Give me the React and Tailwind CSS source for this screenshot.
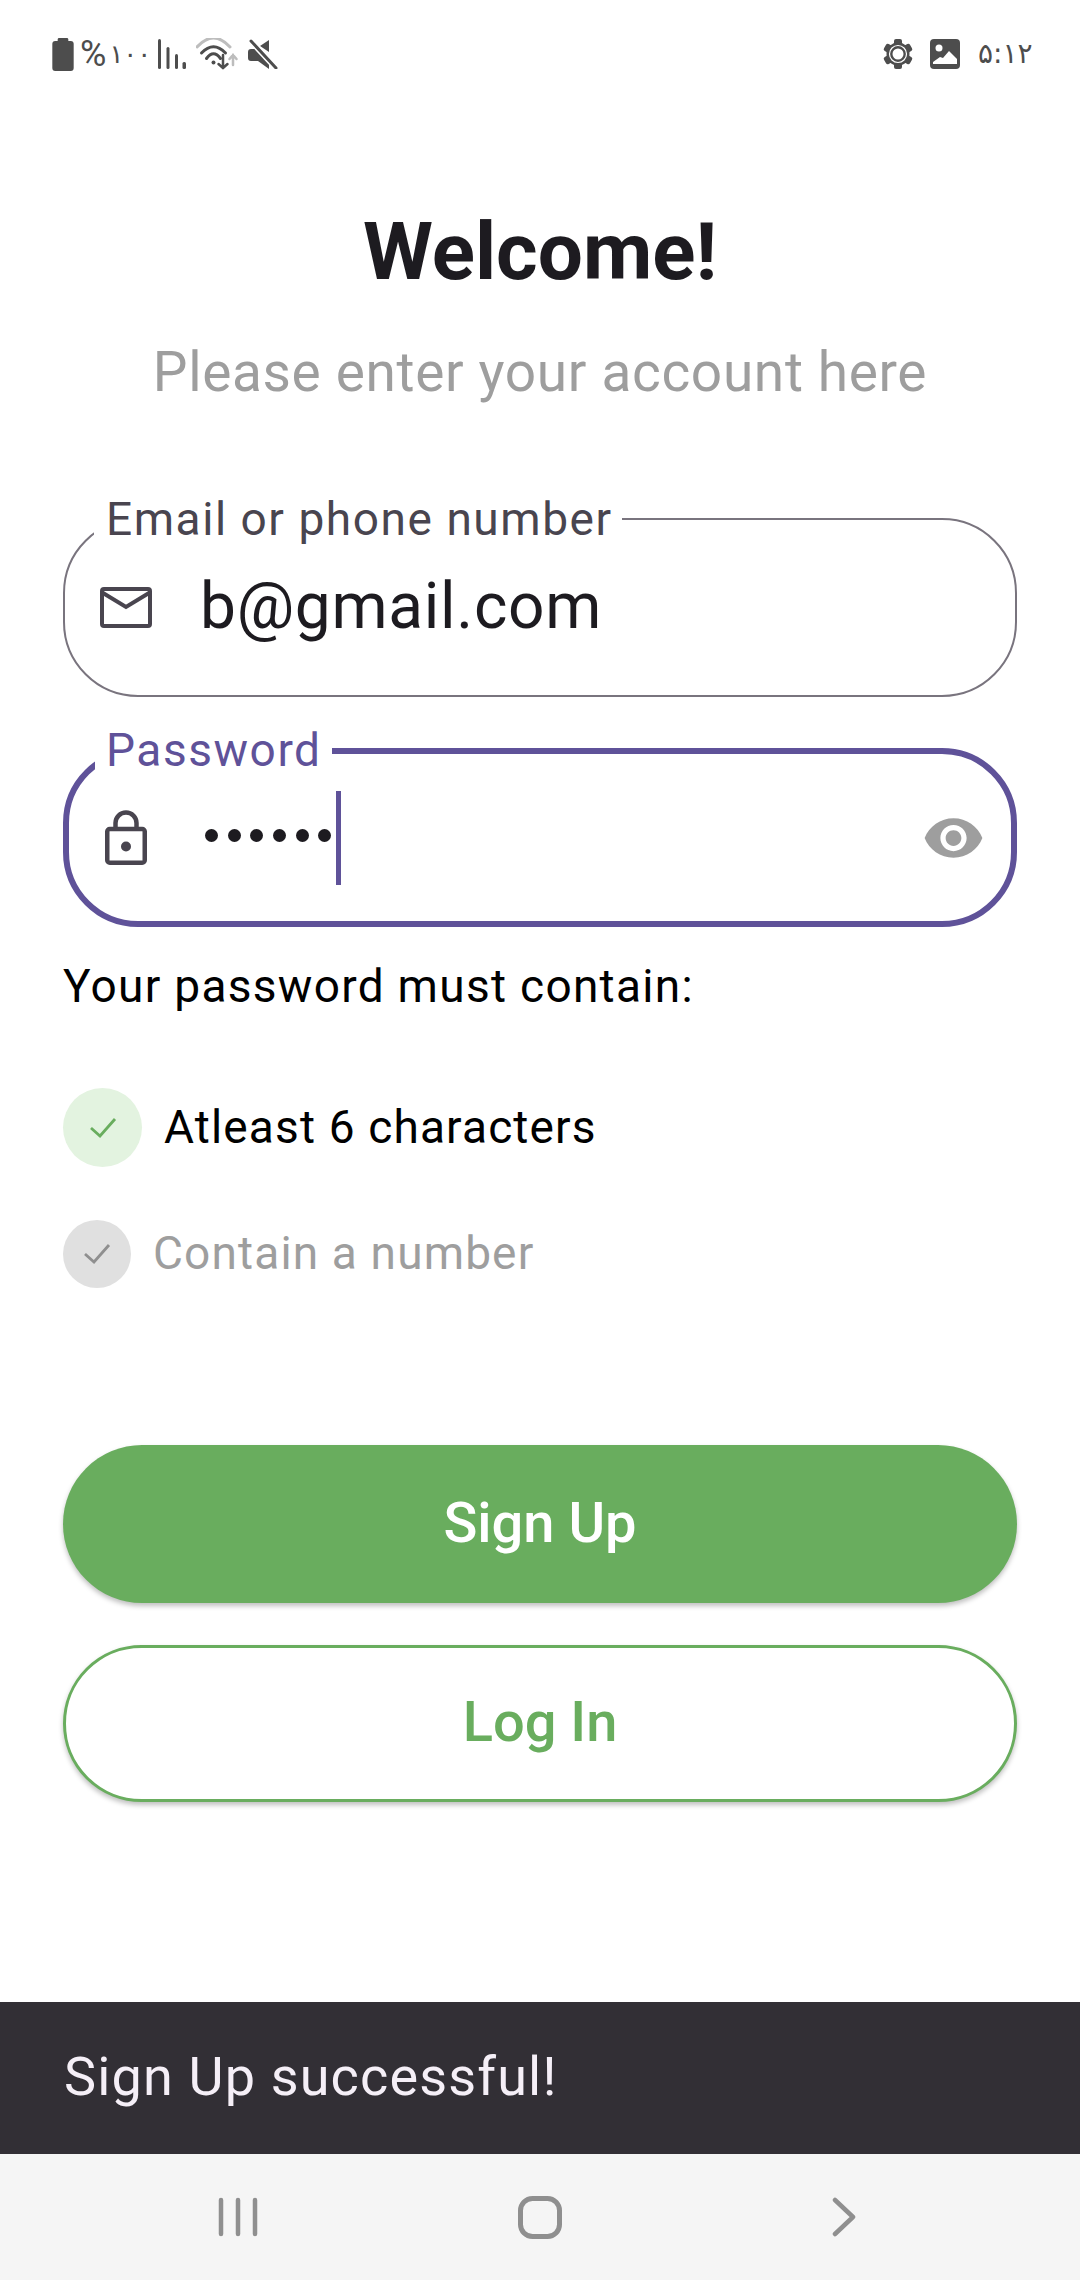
import { useState } from 'react';

function StatusBar() {
  return (
    <div className="h-[108px] flex items-center justify-between pl-[52px] pr-[52px] text-[#4d4d4d]">
      <div className="flex items-center">
        <svg width="22" height="33" viewBox="0 0 22 34" fill="#4d4d4d">
          <path d="M7 0h8a1.5 1.5 0 0 1 1.5 1.5V3H19a3 3 0 0 1 3 3v25a3 3 0 0 1-3 3H3a3 3 0 0 1-3-3V6a3 3 0 0 1 3-3h2.500V1.500A1.500 1.500 0 0 1 7 0z" />
        </svg>
        <span className="ml-[6px] w-[64px] flex items-center whitespace-nowrap leading-none">
          <span className="text-[36px] font-['Roboto',sans-serif]">%</span>
          <span className="ml-[3px] text-[26px] tracking-[-2px] font-['DejaVu_Sans',sans-serif]">۱۰۰</span>
        </span>
        <svg className="ml-[14px]" width="28" height="30" viewBox="0 0 28 30" fill="#4d4d4d">
          <rect x="0" y="0" width="3" height="30" rx="1.500" />
          <rect x="8.500" y="8" width="3" height="22" rx="1.500" />
          <rect x="17" y="15" width="3" height="15" rx="1.500" />
          <rect x="24.500" y="23" width="3.500" height="7" rx="1.500" />
        </svg>
        <svg className="ml-[10px]" width="42" height="32" viewBox="0 0 42 32" fill="none" strokeLinecap="round">
          <path d="M1 9Q17.500 -9 34 9" stroke="#bdbdbd" strokeWidth="3" />
          <path d="M5.500 15Q17.500 2.500 29.500 15" stroke="#4d4d4d" strokeWidth="3" />
          <path d="M10.500 20.500Q17.500 11 24.500 20.500" stroke="#4d4d4d" strokeWidth="3" />
          <circle cx="17.500" cy="24.500" r="2" fill="#4d4d4d" />
          <path d="M27 17V30M22.500 26l4.500 4 4.500-4" stroke="#4d4d4d" strokeWidth="2.500" />
          <path d="M37 27V17M33.500 21l3.500-4 3.500 4" stroke="#bdbdbd" strokeWidth="2.500" />
        </svg>
        <svg className="ml-[10px]" width="30" height="30" viewBox="0 0 30 30" fill="#4d4d4d">
          <path d="M21 1v12L12 7z" />
          <path d="M0 13a3 3 0 0 1 3-3h4l14 15v5l-11-8H3a3 3 0 0 1-3-3z" />
          <path d="M3 2l25 27" stroke="#fff" strokeWidth="6" />
          <path d="M3 2l25 27" stroke="#4d4d4d" strokeWidth="3" strokeLinecap="round" />
        </svg>
      </div>
      <div className="flex items-center">
        <svg width="30" height="30" viewBox="0 0 30 30">
          <g fill="#4d4d4d">
            <circle cx="15" cy="15" r="11.500" />
            <rect x="11" y="0" width="8" height="30" rx="2" />
            <rect x="11" y="0" width="8" height="30" rx="2" transform="rotate(60 15 15)" />
            <rect x="11" y="0" width="8" height="30" rx="2" transform="rotate(120 15 15)" />
          </g>
          <circle cx="15" cy="15" r="8.500" fill="none" stroke="#fff" strokeWidth="1.200" />
          <circle cx="15" cy="15" r="5.500" fill="#fff" />
        </svg>
        <svg className="ml-[17px]" width="30" height="30" viewBox="0 0 30 30">
          <rect width="30" height="30" rx="4" fill="#4d4d4d" />
          <circle cx="9" cy="9" r="3.500" fill="#fff" />
          <path fill="#fff" d="M3 23l7-5 3 1 6-7 8 8v5H3z" />
        </svg>
        <span className="ml-[18px] w-[50px] text-[28px] tracking-[-2.5px] leading-none whitespace-nowrap font-['DejaVu_Sans',sans-serif]">۵:۱۲</span>
      </div>
    </div>
  );
}

function OutlinedField({ label, active, icon, trailing, children, className }) {
  return (
    <div className={`relative h-[179px] rounded-[75px] flex items-center ${active ? 'border-[6px] border-[#5f5299]' : 'border-2 border-[#79747e]'} ${className}`}>
      <span className={`absolute ${active ? 'left-[26px] top-[-26px] pl-[11px] pr-[10px]' : 'left-[29px] top-[-23px] pl-[12px] pr-[9px]'} h-[44px] bg-white text-[46px] leading-[44px] tracking-[1.55px] whitespace-nowrap ${active ? 'text-[#5f5299]' : 'text-[#49454f]'}`}>
        {label}
      </span>
      <div className={`w-[122px] mr-[13px] shrink-0 flex justify-center ${active ? '-ml-[4px]' : ''}`}>{icon}</div>
      {children}
      {trailing}
    </div>
  );
}

function Requirement({ met, text }) {
  return (
    <div className="flex items-center">
      <div className={`flex items-center justify-center rounded-full ${met ? 'w-[79px] h-[79px] bg-[#e3f3e0]' : 'w-[68px] h-[68px] bg-[#e0e0e0]'}`}>
        <svg width="28" height="22" viewBox="0 0 28 22" fill="none" stroke={met ? '#69ad5e' : '#8f8f8f'} strokeWidth="2.800">
          <path d="M2 11l9 8L26 2" />
        </svg>
      </div>
      <span className={`text-[46px] tracking-[1.15px] leading-none -mt-[2px] ${met ? 'ml-[22px] text-black' : 'ml-[22px] text-[#9e9e9e]'}`}>{text}</span>
    </div>
  );
}

export default function App() {
  const [email] = useState('b@gmail.com');

  return (
    <div className="w-[1080px] h-[2280px] bg-white flex flex-col font-['Roboto',sans-serif] overflow-hidden">
      <StatusBar />

      <div className="flex-1 px-[63px]">
        <h1 className="mt-[100px] text-center text-[80px] leading-[88px] font-bold text-[#1d1b20]">Welcome!</h1>
        <p className="mt-[44px] text-center text-[55px] leading-[64px] tracking-[0.65px] text-[#9e9e9e]">Please enter your account here</p>

        <OutlinedField
          className="mt-[114px]"
          label="Email or phone number"
          icon={
            <svg width="52" height="41" viewBox="0 0 52 41" fill="none" stroke="#49454f" strokeWidth="4">
              <rect x="2" y="2" width="48" height="37" rx="2" />
              <path d="M3 6l23 14L49 6" />
            </svg>
          }
        >
          <span className="text-[64px] leading-none tracking-[0.7px] text-[#1d1b20] -mt-[2px]">{email}</span>
        </OutlinedField>

        <OutlinedField
          className="mt-[51px]"
          active
          label="Password"
          icon={
            <svg width="42" height="55" viewBox="0 0 42 55" fill="none" stroke="#49454f" strokeWidth="4.500">
              <rect x="2.250" y="19" width="37.500" height="33.750" rx="2.500" />
              <path d="M10.500 19v-6a10.500 10.500 0 0 1 21 0v6" />
              <circle cx="21" cy="36.500" r="5" fill="#49454f" stroke="none" />
            </svg>
          }
          trailing={
            <svg className="absolute right-[26px] top-1/2 -translate-y-1/2" width="63" height="63" viewBox="0 0 24 24" fill="#9e9e9e">
              <path d="M12 4.500C7 4.500 2.730 7.610 1 12c1.730 4.390 6 7.500 11 7.500s9.270-3.110 11-7.500c-1.730-4.390-6-7.500-11-7.500zM12 17c-2.760 0-5-2.240-5-5s2.240-5 5-5 5 2.240 5 5-2.240 5-5 5zm0-8c-1.660 0-3 1.340-3 3s1.340 3 3 3 3-1.340 3-3-1.340-3-3-3z" />
            </svg>
          }
        >
          <div className="ml-[5px] flex items-center gap-[9.7px] -mt-[5px]">
            {[0, 1, 2, 3, 4, 5].map(i => (
              <span key={i} className="w-[13px] h-[13px] rounded-full bg-[#1d1b20]" />
            ))}
          </div>
          <span className="ml-[5px] w-[5px] h-[94px] bg-[#5f5299]" />
        </OutlinedField>

        <p className="mt-[32px] text-[46px] leading-[54px] tracking-[1.3px] text-black">Your password must contain:</p>

        <div className="mt-[75px]">
          <Requirement met text="Atleast 6 characters" />
        </div>
        <div className="mt-[53px]">
          <Requirement text="Contain a number" />
        </div>

        <button className="mt-[157px] w-full h-[158px] pb-[3px] rounded-[79px] bg-[#69ad5e] text-white text-[56px] font-medium shadow-[0_3px_5px_rgba(0,0,0,0.25)]">
          Sign Up
        </button>
        <button className="mt-[42px] w-full h-[157px] pb-[3px] rounded-[79px] bg-white border-[3px] border-[#69ad5e] text-[#69ad5e] text-[56px] font-medium shadow-[0_3px_5px_rgba(0,0,0,0.25)]">
          Log In
        </button>
      </div>

      <div className="h-[152px] pb-[4px] bg-[#322f35] flex items-center pl-[64px] text-[#f5eff7] text-[54px] tracking-[1.15px]">
        Sign Up successful!
      </div>

      <div className="h-[126px] bg-[#f5f5f5] flex items-center pl-[218px]">
        <svg width="40" height="40" viewBox="0 0 40 40" stroke="#8f8f8f" strokeWidth="4.500" strokeLinecap="round">
          <path d="M3 3v34M20 3v34M37 3v34" />
        </svg>
        <svg className="ml-[260px]" width="44" height="43" viewBox="0 0 44 43" fill="none" stroke="#8f8f8f" strokeWidth="5">
          <rect x="2.500" y="2.500" width="39" height="38" rx="12" />
        </svg>
        <svg className="ml-[270px]" width="24" height="40" viewBox="0 0 24 40" fill="none" stroke="#8f8f8f" strokeWidth="4.500" strokeLinecap="round" strokeLinejoin="round">
          <path d="M3 3l18 17L3 37" />
        </svg>
      </div>
    </div>
  );
}
